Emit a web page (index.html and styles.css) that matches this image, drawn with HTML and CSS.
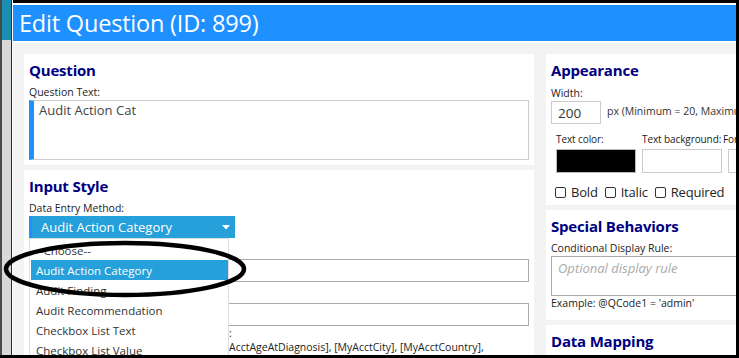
FILE: index.html
```html
<!DOCTYPE html>
<html lang="en">
<head>
<meta charset="utf-8">
<title>Edit Question</title>
<link rel="stylesheet" href="styles.css">
</head>
<body>
<div class="frame">
  <div class="bgstrip"></div>
  <div class="modal">
    <header class="modal-head"><h1>Edit Question (ID: 899)</h1></header>
    <div class="modal-body">
      <div class="col col-left">
        <section class="card">
          <h2>Question</h2>
          <div class="lbl">Question Text:</div>
          <div class="qtext">Audit Action Cat</div>
        </section>
        <section class="card card-input">
          <h2>Input Style</h2>
          <div class="lbl">Data Entry Method:</div>
          <div class="select-wrap">
            <div class="select">
              <span>Audit Action Category</span>
              <svg class="caret" width="8" height="5" viewBox="0 0 8 5"><polygon points="0,0 8,0 4,4.5" fill="#fff"/></svg>
            </div>
            <ul class="dropdown">
              <li>--Choose--</li>
              <li class="sel">Audit Action Category</li>
              <li>Audit Finding</li>
              <li>Audit Recommendation</li>
              <li>Checkbox List Text</li>
              <li>Checkbox List Value</li>
            </ul>
          </div>
          <div class="lbl lbl-gap">Placeholder Text:</div>
          <div class="field"></div>
          <div class="lbl lbl-gap">Default Value:</div>
          <div class="field"></div>
          <div class="tokens">
            <div class="tok-row"><span class="tok-pre">Default value may use these data tokens</span>:</div>
            <div class="tok-row"><span class="tok-pre">[MyAcctNumber], [MyAcctFirstName], [My</span>AcctAgeAtDiagnosis], [MyAcctCity], [MyAcctCountry],</div>
          </div>
        </section>
      </div>
      <div class="col col-right">
        <section class="card card-appear">
          <h2>Appearance</h2>
          <div class="lbl lbl-w">Width:</div>
          <div class="width-row">
            <div class="width-input">200</div>
            <span class="hint">px (Minimum = 20, Maximum = 1000)</span>
          </div>
          <div class="colors">
            <div class="cgroup">
              <div class="lbl">Text color:</div>
              <div class="swatch swatch-black"></div>
            </div>
            <div class="cgroup">
              <div class="lbl">Text background:</div>
              <div class="swatch"></div>
            </div>
            <div class="cgroup cgroup-font">
              <div class="lbl">Font size:</div>
              <div class="swatch swatch-font">12</div>
            </div>
          </div>
          <div class="checks">
            <span class="check"><span class="box"></span>Bold</span>
            <span class="check"><span class="box"></span>Italic</span>
            <span class="check"><span class="box"></span>Required</span>
          </div>
        </section>
        <section class="card card-special">
          <h2>Special Behaviors</h2>
          <div class="lbl">Conditional Display Rule:</div>
          <div class="rule">Optional display rule</div>
          <div class="lbl lbl-ex">Example: @QCode1 = 'admin'</div>
        </section>
        <section class="card">
          <h2>Data Mapping</h2>
        </section>
      </div>
    </div>
  </div>
  <svg class="annot" width="260" height="70" viewBox="0 0 260 70">
    <ellipse cx="125" cy="35" rx="119" ry="26" fill="none" stroke="#000" stroke-width="4.5"/>
  </svg>
</div>
</body>
</html>
```
FILE: styles.css
```css
* { box-sizing: border-box; margin: 0; padding: 0; }
html, body { width: 739px; height: 358px; overflow: hidden; background: #000; }
body { font-family: "Open Sans", "Noto Sans", sans-serif; color: #222; }

.frame {
  position: relative;
  display: flex;
  height: 358px;
  border-bottom: 3px solid #000;
  border-right: 3px solid #000;
  overflow: hidden;
  background: #fff;
}

.bgstrip {
  flex: none;
  width: 13px;
  background:
    linear-gradient(90deg, #4a4a4a 0 2px, transparent 2px 11px, #2a2a2a 11px 12px, #fff 12px 13px),
    linear-gradient(180deg, #1a8db4 0 40px, #d8d8d8 40px);
}

.modal {
  flex: 1;
  min-width: 0;
  display: flex;
  flex-direction: column;
  background: #f3f3f3;
  border-top: 3px solid #000;
  overflow: hidden;
}

.modal-head {
  flex: none;
  background: #1e90ff;
  border-top: 2px solid #fff;
  border-bottom: 2px solid #fff;
  height: 40px;
  padding-left: 6px;
}
.modal-head h1 {
  font-weight: 400;
  font-size: 23.5px;
  line-height: 36px;
  color: #fff;
  letter-spacing: -0.2px;
}

.modal-body {
  display: flex;
  align-items: flex-start;
  gap: 12px;
  padding: 11px 0 0 11px;
}

.col { flex: none; display: flex; flex-direction: column; gap: 5px; }
.col-left { width: 510px; }
.col-right { width: 300px; }

.card { background: #fff; padding: 6px 5px 5px 5px; }
.card h2 {
  font-size: 15px;
  line-height: 20px;
  font-weight: 700;
  color: #000080;
  letter-spacing: -0.2px;
}

.lbl { font-size: 10.5px; line-height: 15px; color: #222; margin-top: 5px; white-space: nowrap; }

.qtext {
  height: 60px;
  border: 1px solid #ccc;
  border-left: 5px solid #1e90ff;
  padding: 1px 5px;
  font-size: 13px;
  line-height: 16px;
  color: #444;
}

.card-input { height: 200px; }

.select-wrap { position: relative; width: 206px; }
.select {
  height: 22px;
  background: #26a0da;
  border-left: 3px solid #1e90ff;
  padding: 1px 0 0 9px;
  display: flex;
  align-items: flex-start;
  justify-content: space-between;
  color: #fff;
  font-size: 13px;
  line-height: 21px;
}
.caret { margin: 8px 5px 0 0; }

.dropdown {
  position: absolute;
  z-index: 2;
  top: 22px;
  left: 0;
  width: 200px;
  list-style: none;
  background: #fff;
  border: 1px solid #ddd;
  padding: 1px 0 0 1px;
  font-size: 11.5px;
  line-height: 21px;
  color: #333;
}
.dropdown li { height: 20px; padding-left: 5px; white-space: nowrap; }
.dropdown li.sel { background: #26a0da; color: #fff; }

.lbl-gap { margin-top: 6px; }
.field { height: 23px; border: 1px solid #aaa; width: 500px; }
.tokens { font-size: 10.5px; line-height: 14px; color: #222; white-space: nowrap; }
.tok-row { height: 14px; }
.tok-pre { display: inline-block; width: 200px; height: 14px; overflow: hidden; vertical-align: top; padding-left: 1px; }

.card-appear { padding-bottom: 3px; }
.lbl-w { margin-top: 6px; }
.width-row { display: flex; align-items: center; gap: 6px; }
.width-input {
  width: 50px; height: 23px;
  border: 1px solid #ccc;
  padding: 2px 0 0 6px;
  font-size: 13.5px; line-height: 18px; color: #333;
}
.hint { font-size: 10.5px; color: #333; white-space: nowrap; margin-top: -4px; }

.colors { display: flex; gap: 6px; padding-left: 5px; margin-top: 8px; }
.cgroup { width: 80px; flex: none; }
.cgroup .lbl { margin-top: 0; margin-bottom: 2px; font-size: 10px; letter-spacing: -0.1px; }
.cgroup-font { margin-left: -5px; }
.cgroup-font .swatch { margin-left: 5px; }
.swatch { width: 80px; height: 24px; border: 1px solid #ccc; background: #fff; }
.swatch-black { background: #000; border-color: #bbb; }
.swatch-font { font-size: 13px; padding-left: 6px; line-height: 22px; color: #333; }

.checks { display: flex; align-items: center; margin-top: 9px; padding-left: 4px; height: 20px; font-size: 13px; letter-spacing: -0.2px; color: #222; }
.check { display: inline-flex; align-items: center; gap: 5px; margin-right: 7px; }
.box { width: 11px; height: 11px; border: 1px solid #333; border-radius: 2px; background: #fff; }

.card-special { padding-bottom: 9px; }
.rule {
  height: 40px;
  border: 1px solid #aaa;
  padding: 2px 6px;
  font-size: 13px; line-height: 18px;
  font-style: italic;
  color: #aaa;
}
.lbl-ex { margin-top: 0; }

.annot {
  position: absolute;
  left: 0;
  top: 234px;
  z-index: 5;
}
```
